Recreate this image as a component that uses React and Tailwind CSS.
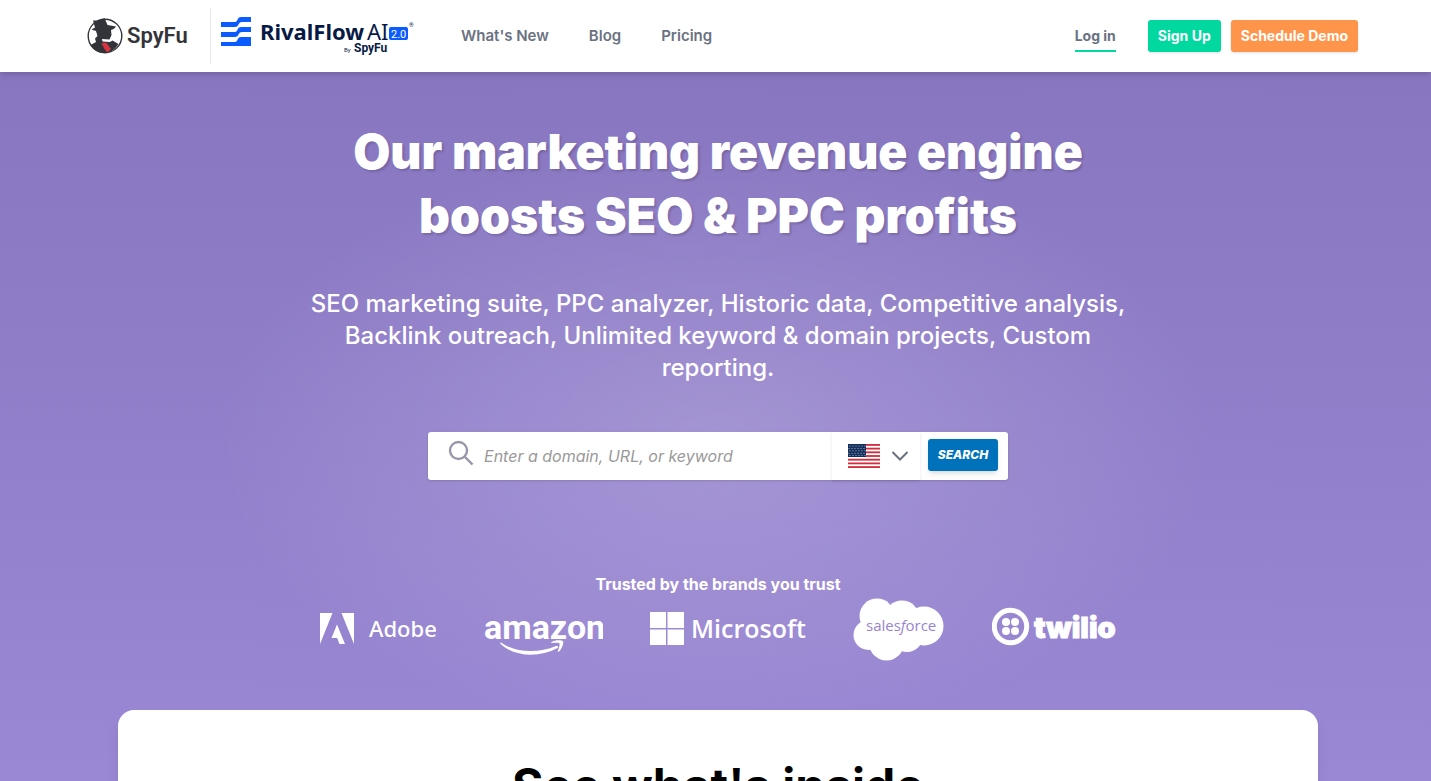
import { useState } from "react";

const navLinks = ["What's New", "Blog", "Pricing"];

function SpyFuLogo() {
  return (
    <svg width="102" height="40" viewBox="-1 0 102 40" role="img" aria-label="SpyFu">
      <circle cx="18" cy="20" r="16.8" fill="#fff" stroke="#33343a" strokeWidth="1.4" />
      <path
        d="M6 4.500 L12 4.500 L17.500 2 L20.500 9 L29 10.500 C28 12.500 26 13.500 24 14 L24.500 19 L22.500 23.500 L15 23 L15.500 25.500 L23 26 L25.500 24.500 L31.500 28 C27 35.500 21 37.500 16 37 C10 36.500 6 33.500 3.500 29 L9 26 L8 22.500 L10.500 20 L9 15 L4.500 13.500 L8 11.500 Z"
        fill="#33343a"
      />
      <path d="M14.500 27.500 L19 26.500 L24 33 L20.500 36.500 L17.500 33 Z" fill="#d9343f" />
      <text x="40" y="27" fontFamily="Roboto, sans-serif" fontSize="22" fontWeight="600" fill="#33343a">
        SpyFu
      </text>
    </svg>
  );
}

function RivalFlowLogo() {
  return (
    <svg width="194" height="44" viewBox="0 0 194 44" role="img" aria-label="RivalFlow AI 2.0 by SpyFu">
      <g fill="#0b5cff">
        <path d="M0 8 H14 C17 8 16 3 20 3 H30 V8 H21 C17 8 18 13 14 13 H0 Z" />
        <path d="M0 18 H14 C17 18 16 13 20 13 H30 V18 H21 C17 18 18 23 14 23 H0 Z" />
        <path d="M0 28 H14 C17 28 16 23 20 23 H30 V32 H0 Z" />
      </g>
      <text x="39" y="26" fontFamily="'Noto Sans', sans-serif" fontSize="22" fontWeight="700" fill="#071a45">
        RivalFlow
      </text>
      <text x="146" y="26" fontFamily="'Noto Sans', sans-serif" fontSize="22" fill="#071a45">
        AI
      </text>
      <rect x="168" y="13" width="19" height="13" rx="2" fill="#0b5cff" />
      <text x="170" y="24" fontFamily="Roboto, sans-serif" fontSize="11" fill="#fff">
        2.0
      </text>
      <text x="188" y="13" fontFamily="Roboto, sans-serif" fontSize="6" fill="#071a45">
        ®
      </text>
      <text x="123" y="38" fontFamily="Roboto, sans-serif" fontSize="6" fill="#071a45">
        By
      </text>
      <text x="133" y="38" fontFamily="Roboto, sans-serif" fontSize="12" fontWeight="700" fill="#071a45">
        SpyFu
      </text>
    </svg>
  );
}

function Header() {
  return (
    <header className="relative bg-white pl-[5px] shadow-md">
      <div className="mx-auto flex h-[72px] max-w-[1280px] items-center pl-2">
        <a href="#home" className="flex h-14 w-[125px] items-center border-r border-gray-200">
          <SpyFuLogo />
        </a>
        <a href="#rivalflow" className="ml-2.5">
          <RivalFlowLogo />
        </a>
        <nav className="ml-[46px] flex gap-10 font-semibold text-gray-500">
          {navLinks.map((label) => (
            <a key={label} href="#nav" className="text-[15px] leading-6">
              {label}
            </a>
          ))}
        </nav>
        <div className="ml-auto flex items-center text-sm font-bold">
          <a href="#login" className="mr-8 border-b-2 border-[#00d8a0] pt-0.5 leading-7 text-gray-500">
            Log in
          </a>
          <button className="mr-2.5 h-8 rounded-[3px] bg-[#00d8a0] px-2.5 text-white shadow-sm">
            Sign Up
          </button>
          <button className="h-8 rounded-[3px] bg-[#ff954a] px-2.5 text-white shadow-sm">
            Schedule Demo
          </button>
        </div>
      </div>
    </header>
  );
}

function UsFlag() {
  const stripes = [0, 2, 4, 6, 8, 10, 12];
  const stars = [];
  for (let row = 0; row < 5; row++) {
    for (let col = 0; col < 6; col++) {
      stars.push([2 + col * 3 - (row % 2), 2 + row * 2.4]);
    }
  }
  return (
    <svg width="32" height="24" viewBox="0 0 32 24" aria-hidden="true">
      <rect width="32" height="24" fill="#fff" />
      {stripes.map((n) => (
        <rect key={n} y={(n * 24) / 13} width="32" height={24 / 13} fill="#d22f3e" />
      ))}
      <rect width="18" height="13" fill="#142f5b" />
      {stars.map(([x, y], i) => (
        <circle key={i} cx={x} cy={y} r="0.5" fill="#d5dde8" />
      ))}
    </svg>
  );
}

function SearchBar() {
  const [query, setQuery] = useState("");

  return (
    <form
      onSubmit={(e) => e.preventDefault()}
      className="mx-auto mt-12 flex h-12 max-w-[580px] items-center rounded-[3px] bg-white shadow-sm"
    >
      <svg className="mb-1.5 ml-5" width="26" height="26" viewBox="0 0 26 26" fill="none" stroke="#9896a8" strokeWidth="2.4" aria-hidden="true">
        <circle cx="10.500" cy="10.500" r="8.500" />
        <path d="M16.500 16.500 L24.500 24.500" />
      </svg>
      <input
        type="text"
        aria-label="Domain, URL, or keyword"
        value={query}
        onChange={(e) => setQuery(e.target.value)}
        placeholder="Enter a domain, URL, or keyword"
        className="ml-2.5 min-w-0 flex-1 text-base italic text-gray-700 outline-none placeholder:text-[#999]"
      />
      <button
        type="button"
        aria-label="Country: United States"
        className="flex h-12 w-[88px] items-center justify-between pl-4 pr-3 shadow"
      >
        <UsFlag />
        <svg width="16" height="10" viewBox="0 0 16 10" fill="none" stroke="#6b7280" strokeWidth="2" aria-hidden="true">
          <path d="M0.500 1 L8 8.500 L15.500 1" />
        </svg>
      </button>
      <button
        type="submit"
        className="mr-2.5 mb-0.5 ml-2 h-8 w-[70px] rounded-[3px] bg-[#0072bc] text-xs font-extrabold italic text-white shadow-md"
      >
        SEARCH
      </button>
    </form>
  );
}

function Brands() {
  return (
    <div className="mx-auto flex max-w-[798px] items-center justify-between pt-0.5 text-white">
      <svg width="118" height="64" viewBox="0 0 118 64" fill="currentColor" role="img" aria-label="Adobe">
        <path d="M1 15 H13.500 L1 46 Z M22.500 15 H35 V46 Z M18 26.500 L26 46 H20.500 L18.200 40 H12.500 Z" />
        <text x="50" y="39" fontFamily="'Noto Sans', sans-serif" fontSize="22" fontWeight="500">
          Adobe
        </text>
      </svg>
      <svg width="119" height="64" viewBox="0 0 119 64" fill="currentColor" role="img" aria-label="amazon">
        <text x="0" y="41" fontFamily="Roboto, sans-serif" fontSize="34" fontWeight="700">
          amazon
        </text>
        <path d="M17 44.500 C31 55 55 55.500 72 48 C74 47.500 75 49 73.500 50 C55 60 31 59 16.500 46 C16 45 16.500 44.300 17 44.500 Z" />
        <path d="M67.500 44 C71 41.500 78 42 79 43 C80 45 78 51 75 53.500 C74 54 73.500 53.500 74 52.500 C75 50 76 46.500 75.500 45.500 C74.500 44.500 71 44.800 68 45 C67 45 67 44.500 67.500 44 Z" />
      </svg>
      <svg width="157" height="64" viewBox="0 0 157 64" fill="currentColor" role="img" aria-label="Microsoft">
        <path d="M0 14 H16 V30 H0 Z M17.500 14 H34 V30 H17.500 Z M0 31.500 H16 V47 H0 Z M17.500 31.500 H34 V47 H17.500 Z" />
        <text x="41" y="40" fontFamily="'Open Sans', sans-serif" fontSize="25" fontWeight="600">
          Microsoft
        </text>
      </svg>
      <svg width="92" height="64" viewBox="0 0 92 64" fill="currentColor" role="img" aria-label="salesforce">
        <circle cx="24" cy="18" r="17.500" />
        <circle cx="49" cy="20" r="17.500" />
        <circle cx="71" cy="28" r="19.500" />
        <circle cx="15.500" cy="37" r="15" />
        <circle cx="33.500" cy="45" r="17.500" />
        <circle cx="54" cy="38" r="16" />
        <text x="13" y="33" fontFamily="'Open Sans', sans-serif" fontSize="15" fill="#9884d2">
          sales
          <tspan fontStyle="italic">f</tspan>
          orce
        </text>
      </svg>
      <svg width="125" height="64" viewBox="0 0 125 64" fill="currentColor" role="img" aria-label="twilio">
        <circle cx="18.500" cy="28.500" r="16.200" fill="none" stroke="currentColor" strokeWidth="5" />
        <circle cx="14" cy="24" r="4" />
        <circle cx="23" cy="24" r="4" />
        <circle cx="14" cy="33" r="4" />
        <circle cx="23" cy="33" r="4" />
        <text x="42" y="40" fontFamily="Inter, sans-serif" fontSize="29" fontWeight="900" stroke="currentColor" strokeWidth="1">
          twilio
        </text>
      </svg>
    </div>
  );
}

export default function App() {
  return (
    <div className="h-screen overflow-hidden bg-[#9b89d4] font-['Inter',sans-serif]">
      <Header />
      <main className="h-full bg-[radial-gradient(500px_300px_at_50%_370px,#ffffff2b_0%,#ffffff00_100%),linear-gradient(#8876c0,#9b88d5_710px)] pl-[5px]">
        <section className="pt-12 text-center text-white">
          <h1 className="mx-auto max-w-[800px] text-5xl leading-16 font-black text-shadow-[2px_2px_2px_#00000026]">
            Our marketing revenue engine boosts SEO &amp; PPC profits
          </h1>
          <p className="mx-auto mt-10 max-w-[832px] text-2xl leading-8 font-medium">
            SEO marketing suite, PPC analyzer, Historic data, Competitive analysis, Backlink
            outreach, Unlimited keyword &amp; domain projects, Custom reporting.
          </p>
          <SearchBar />
          <h2 className="mt-[92px] text-base leading-6 font-bold">Trusted by the brands you trust</h2>
          <Brands />
        </section>
        <section className="mx-auto mt-12 max-w-[1200px] rounded-t-2xl bg-white pt-11 pb-20 text-center shadow-lg">
          <h2 className="text-5xl leading-16 font-bold text-black">See what's inside</h2>
        </section>
      </main>
    </div>
  );
}
